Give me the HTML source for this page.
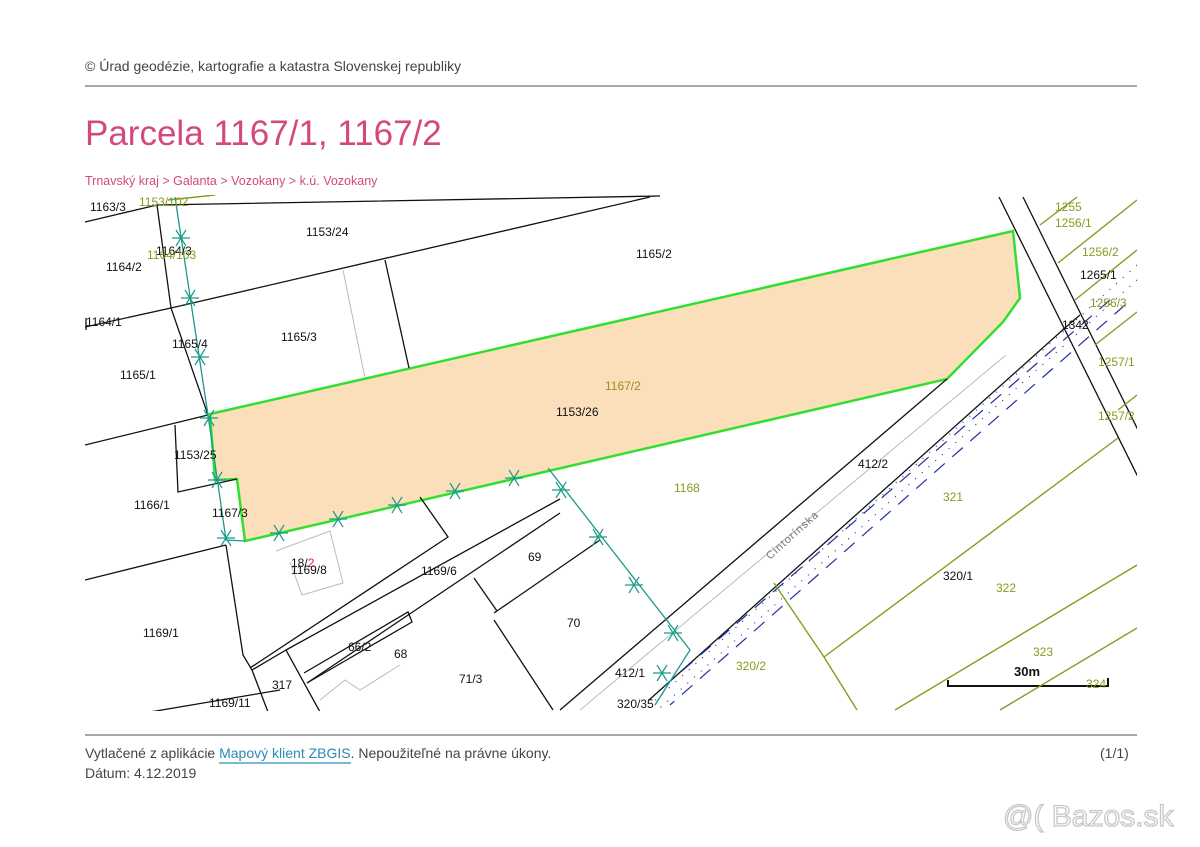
<!DOCTYPE html>
<html><head><meta charset="utf-8"><style>
html,body{margin:0;padding:0;background:#fff;}
body{width:1200px;height:847px;position:relative;overflow:hidden;font-family:"Liberation Sans",sans-serif;}
.t{position:absolute;white-space:nowrap;}
</style></head><body>
<div class="t" style="left:85px;top:58px;font-size:14px;color:#444;">© Úrad geodézie, kartografie a katastra Slovenskej republiky</div>
<div style="position:absolute;left:85px;top:85px;width:1052px;height:2px;background:#a8a8a8;"></div>
<div class="t" style="left:85px;top:114px;font-size:35px;color:#d2497d;">Parcela 1167/1, 1167/2</div>
<div class="t" style="left:85px;top:174px;font-size:12.5px;color:#d2497d;">Trnavský kraj &gt; Galanta &gt; Vozokany &gt; k.ú. Vozokany</div>

<svg style="position:absolute;left:0;top:0" width="1200" height="847" font-family="Liberation Sans, sans-serif" font-size="12">
<defs><clipPath id="c"><rect x="85" y="195" width="1052" height="516"/></clipPath></defs>
<g clip-path="url(#c)" fill="none">
<polygon points="210,414 1013,231 1020,298 1003,322 947,379 245,541 237,479 215,480" fill="#fbdfba" stroke="#2fe02f" stroke-width="2.5"/>
<g stroke="#111" stroke-width="1.3">
<polyline points="85,222 157,205 660,196"/>
<polyline points="157,205 171,308 208,415"/>
<polyline points="85,327 171,308 650,197"/>
<line x1="86" y1="318" x2="86" y2="330"/>
<line x1="385" y1="260" x2="409" y2="368"/>
<polyline points="85,445 208,415"/>
<polyline points="175,425 178,492 237,479"/>
<polyline points="85,580 226,545"/>
<polyline points="226,545 243,655 252,670 268,712"/>
<polyline points="420,497 448,537 250,668"/>
<polyline points="252,670 286,650 320,712"/>
<line x1="286" y1="650" x2="560" y2="499"/>
<polyline points="304,673 408,612 412,622 307,683"/>
<line x1="307" y1="683" x2="560" y2="513"/>
<line x1="474" y1="578" x2="497" y2="611"/>
<line x1="494" y1="613" x2="600" y2="540"/>
<line x1="494" y1="620" x2="553" y2="710"/>
<line x1="947" y1="379" x2="560" y2="710"/>
<line x1="1066" y1="327" x2="649" y2="700"/>
<line x1="1066" y1="327" x2="1080" y2="315"/>
<line x1="999" y1="197" x2="1138" y2="477"/>
<line x1="1023" y1="197" x2="1138" y2="430"/>
<line x1="150" y1="712" x2="280" y2="690"/>
<polyline points="948,680 948,686 1108,686 1108,678" stroke-width="2"/>
</g>
<g stroke="#bbb" stroke-width="1">
<line x1="343" y1="270" x2="365" y2="378"/>
<line x1="1006" y1="355" x2="580" y2="710"/>
<polyline points="276,551 330,531 343,583 302,595 290,562"/>
<polyline points="320,700 345,680 360,690 400,665"/>
</g>
<g stroke="#2030a0" stroke-width="1.2" stroke-dasharray="14,10">
<line x1="1110" y1="300" x2="660" y2="690"/>
<line x1="1125" y1="305" x2="670" y2="705"/>
</g>
<g stroke="#2030a0" stroke-width="1.2" stroke-dasharray="1,8">
<line x1="1137" y1="265" x2="650" y2="705"/>
<line x1="1137" y1="280" x2="660" y2="708"/>
</g>
<g stroke="#7fa020" stroke-width="1.4">
<line x1="1040" y1="225" x2="1077" y2="197"/>
<line x1="1058" y1="263" x2="1137" y2="200"/>
<line x1="1075" y1="300" x2="1137" y2="250"/>
<line x1="1095" y1="345" x2="1137" y2="312"/>
<line x1="1118" y1="410" x2="1137" y2="395"/>
<polyline points="774,583 824,657 857,710"/>
<line x1="824" y1="657" x2="1118" y2="438"/>
<line x1="895" y1="710" x2="1137" y2="565"/>
<line x1="1000" y1="710" x2="1137" y2="628"/>
<line x1="168" y1="200" x2="215" y2="195"/>
</g>
<g stroke="#1a9a8a" stroke-width="1.3">
<polyline points="175,197 208,415 226,540 245,541"/>
<polyline points="548,468 690,650 655,705"/>
</g>
<g stroke="#1a9a8a" stroke-width="1.2">
<g transform="translate(181,238)"><path d="M-9,0H9M-5,-8L5,8M5,-8L-5,8"/></g>
<g transform="translate(190,298)"><path d="M-9,0H9M-5,-8L5,8M5,-8L-5,8"/></g>
<g transform="translate(200,357)"><path d="M-9,0H9M-5,-8L5,8M5,-8L-5,8"/></g>
<g transform="translate(209,418)"><path d="M-9,0H9M-5,-8L5,8M5,-8L-5,8"/></g>
<g transform="translate(217,480)"><path d="M-9,0H9M-5,-8L5,8M5,-8L-5,8"/></g>
<g transform="translate(226,538)"><path d="M-9,0H9M-5,-8L5,8M5,-8L-5,8"/></g>
<g transform="translate(279,533)"><path d="M-9,0H9M-5,-8L5,8M5,-8L-5,8"/></g>
<g transform="translate(338,519)"><path d="M-9,0H9M-5,-8L5,8M5,-8L-5,8"/></g>
<g transform="translate(397,505)"><path d="M-9,0H9M-5,-8L5,8M5,-8L-5,8"/></g>
<g transform="translate(455,491)"><path d="M-9,0H9M-5,-8L5,8M5,-8L-5,8"/></g>
<g transform="translate(514,478)"><path d="M-9,0H9M-5,-8L5,8M5,-8L-5,8"/></g>
<g transform="translate(561,490)"><path d="M-9,0H9M-5,-8L5,8M5,-8L-5,8"/></g>
<g transform="translate(598,537)"><path d="M-9,0H9M-5,-8L5,8M5,-8L-5,8"/></g>
<g transform="translate(634,585)"><path d="M-9,0H9M-5,-8L5,8M5,-8L-5,8"/></g>
<g transform="translate(673,633)"><path d="M-9,0H9M-5,-8L5,8M5,-8L-5,8"/></g>
<g transform="translate(662,673)"><path d="M-9,0H9M-5,-8L5,8M5,-8L-5,8"/></g>
</g>
</g>
<g fill="#111">
<text x="90" y="211">1163/3</text>
<text x="306" y="236">1153/24</text>
<text x="156" y="255">1164/3</text>
<text x="106" y="271">1164/2</text>
<text x="86" y="326">1164/1</text>
<text x="172" y="348">1165/4</text>
<text x="281" y="341">1165/3</text>
<text x="120" y="379">1165/1</text>
<text x="636" y="258">1165/2</text>
<text x="556" y="416">1153/26</text>
<text x="174" y="459">1153/25</text>
<text x="134" y="509">1166/1</text>
<text x="212" y="517">1167/3</text>
<text x="291" y="574">1169/8</text>
<text x="291" y="567">18/<tspan fill="#d0203a">2</tspan></text>
<text x="421" y="575">1169/6</text>
<text x="528" y="561">69</text>
<text x="567" y="627">70</text>
<text x="143" y="637">1169/1</text>
<text x="348" y="651">66/2</text>
<text x="394" y="658">68</text>
<text x="272" y="689">317</text>
<text x="459" y="683">71/3</text>
<text x="209" y="707">1169/11</text>
<text x="858" y="468">412/2</text>
<text x="943" y="580">320/1</text>
<text x="615" y="677">412/1</text>
<text x="617" y="708">320/35</text>
<text x="1080" y="279">1265/1</text>
<text x="1062" y="329">1342</text>
<text x="1014" y="676" font-weight="bold" font-size="13">30m</text>
</g>
<g fill="#8a9a20">
<text x="139" y="206">1153/102</text>
<text x="147" y="259">1164/103</text>
<text x="605" y="390" fill="#a08a20">1167/2</text>
<text x="674" y="492">1168</text>
<text x="943" y="501">321</text>
<text x="996" y="592">322</text>
<text x="1033" y="656">323</text>
<text x="1086" y="688">324</text>
<text x="736" y="670">320/2</text>
<text x="1055" y="211">1255</text>
<text x="1055" y="227">1256/1</text>
<text x="1082" y="256">1256/2</text>
<text x="1090" y="307">1256/3</text>
<text x="1098" y="366">1257/1</text>
<text x="1098" y="420">1257/2</text>
</g>
<text x="0" y="0" fill="#777" font-size="11" letter-spacing="1" transform="translate(770,560) rotate(-42)">Cintorínska</text>
</svg>

<div style="position:absolute;left:85px;top:734px;width:1052px;height:2px;background:#a8a8a8;"></div>
<div class="t" style="left:85px;top:745px;font-size:14px;color:#444;">Vytlačené z aplikácie <span style="color:#2a8ab8;border-bottom:2px solid #7ab8d8;padding-bottom:1px;">Mapový klient ZBGIS</span>. Nepoužiteľné na právne úkony.</div>
<div class="t" style="left:1100px;top:745px;font-size:14px;color:#444;">(1/1)</div>
<div class="t" style="left:85px;top:765px;font-size:14px;color:#444;">Dátum: 4.12.2019</div>
<div class="t" style="left:1003px;top:800px;font-size:30px;color:#fff;-webkit-text-stroke:1.3px #c8c8c8;">@( Bazos.sk</div>
</body></html>
